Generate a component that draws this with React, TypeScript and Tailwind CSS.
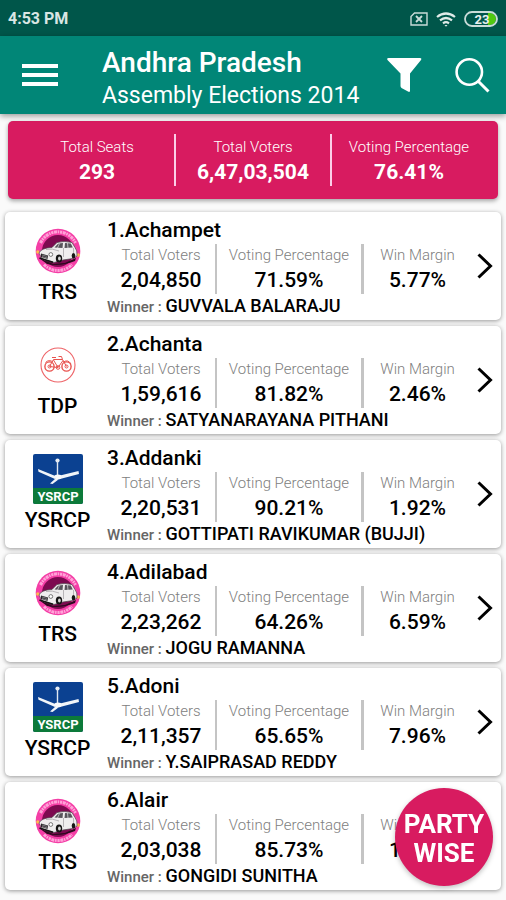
import React from 'react';

type Party = 'TRS' | 'TDP' | 'YSRCP';

interface Constituency {
  name: string;
  party: Party;
  voters: string;
  percentage: string;
  margin: string;
  winner: string;
}

const summary = [
  { label: 'Total Seats', value: '293' },
  { label: 'Total Voters', value: '6,47,03,504' },
  { label: 'Voting Percentage', value: '76.41%' },
];

const constituencies: Constituency[] = [
  { name: 'Achampet', party: 'TRS', voters: '2,04,850', percentage: '71.59%', margin: '5.77%', winner: 'GUVVALA BALARAJU' },
  { name: 'Achanta', party: 'TDP', voters: '1,59,616', percentage: '81.82%', margin: '2.46%', winner: 'SATYANARAYANA PITHANI' },
  { name: 'Addanki', party: 'YSRCP', voters: '2,20,531', percentage: '90.21%', margin: '1.92%', winner: 'GOTTIPATI RAVIKUMAR (BUJJI)' },
  { name: 'Adilabad', party: 'TRS', voters: '2,23,262', percentage: '64.26%', margin: '6.59%', winner: 'JOGU RAMANNA' },
  { name: 'Adoni', party: 'YSRCP', voters: '2,11,357', percentage: '65.65%', margin: '7.96%', winner: 'Y.SAIPRASAD REDDY' },
  { name: 'Alair', party: 'TRS', voters: '2,03,038', percentage: '85.73%', margin: '1.67%', winner: 'GONGIDI SUNITHA' },
];

const CarLogo = () => (
  <svg viewBox="0 0 46 46" className="size-[46px]" aria-hidden="true">
    <circle cx="23" cy="23" r="22.3" fill="#f43ea6" />
    <path d="M5.5 15 A19.3 19.3 0 0 1 40.5 15" fill="none" stroke="#ffa3d8" strokeWidth="3" strokeDasharray="3 .7 1.6 .8 2.2 .6" />
    <path d="M9 36.5 A19.3 19.3 0 0 0 37 36.5" fill="none" stroke="#ffa3d8" strokeWidth="3" strokeDasharray="3 .7 1.6 .8 2.2 .6" />
    <circle cx="23" cy="23" r="16" fill="#7d0a50" />
    <circle cx="2.8" cy="24" r="1.7" fill="#ffb84f" />
    <circle cx="43.2" cy="27" r="1.7" fill="#ffb84f" />
    <path d="M4 30 L18 36 L30 35 L41 30 L40 33 Q25 39 12 36Z" fill="#2c0a1f" />
    <path d="M4 25 Q6 20 17 19.5 L22 14.5 Q29 12.5 37 14.5 L40 19.5 Q42.5 22 42 28 L38 30.5 L28 32 L19 34.5 L7 31Z" fill="#efedee" stroke="#4b4549" strokeWidth=".7" />
    <path d="M19.5 19.5 L23 15.8 Q26 15 28 15 L27.5 20Z M30 15 L35.8 15.6 L37.8 19.5 L29.5 20Z" fill="#57545a" />
    <path d="M24.5 15.5 L22.5 20 M32.5 15 L33 20" stroke="#e6e4e6" strokeWidth=".7" />
    <path d="M11 21.5 Q17 20 24 23 M28.5 20 V29 M38.5 20 V25" fill="none" stroke="#a09ca0" strokeWidth=".7" />
    <path d="M6 25.5 L13 27.5 L12.5 31 L6 29Z" fill="#29262a" />
    <path d="M7 27 L12 28.3 M7 28.6 L12 29.9" stroke="#d0ced0" strokeWidth=".5" />
    <circle cx="15.8" cy="26.5" r="1.9" fill="#fff" stroke="#444" strokeWidth=".7" />
    <ellipse cx="24" cy="30.5" rx="3.2" ry="4" fill="#151515" />
    <ellipse cx="24.4" cy="30.5" rx="1.4" ry="2" fill="#d5d5d5" />
    <ellipse cx="38.5" cy="27.8" rx="1.8" ry="2.8" fill="#151515" />
    <path d="M4.5 30 L18 34.3" stroke="#151515" strokeWidth="1.6" />
  </svg>
);

const CycleLogo = () => (
  <svg viewBox="0 0 36 36" className="size-9" fill="none" stroke="#e8534f" aria-hidden="true">
    <circle cx="18" cy="18" r="17" stroke="#ee6468" strokeWidth="1.1" />
    <circle cx="9.5" cy="19.5" r="4.6" strokeWidth="1.4" />
    <circle cx="26.5" cy="19.5" r="4.6" strokeWidth="1.4" />
    <circle cx="9.5" cy="19.5" r="1.5" strokeWidth="1" />
    <circle cx="26.5" cy="19.5" r="1.5" strokeWidth="1" />
    <circle cx="18" cy="20.5" r="1.8" strokeWidth="1" />
    <path d="M9.5 19.5 L13.5 12.5 L22.5 12.5 L26.5 19.5 M13.5 13 L18 20.5 L23 13.5 M9.5 19.5 L18 20.5 M12 10.5h4 M22.5 12.5 L21.5 9.5 L18.5 9.5 M5.5 15.5 Q9 12 13 15 M23.5 15 Q28 12 31 17" strokeWidth="1" />
  </svg>
);

const FanLogo = () => (
  <svg viewBox="0 0 50 50" className="size-[50px]" aria-hidden="true">
    <rect width="50" height="50" rx="2" fill="#0b4191" />
    <path d="M0 34 H50 V48 a2 2 0 0 1 -2 2 H2 a2 2 0 0 1 -2 -2Z" fill="#0c7a3a" />
    <circle cx="24.5" cy="6.5" r="2.1" fill="#e8eef6" />
    <path d="M24.5 7 V22" stroke="#dfe7f1" strokeWidth="1.4" />
    <path d="M23 22.3 L5 15 L5.5 17.8 L22 25Z M27 21.5 L45.5 17 L46 20 L27 25Z M22.5 24.5 L17 29.5 L19.5 30 L25.5 25.5Z" fill="#f1f5f9" />
    <ellipse cx="25" cy="23" rx="3.6" ry="2.4" fill="#f7f9fb" />
    <text x="25" y="47" textAnchor="middle" fontFamily="Roboto, sans-serif" fontSize="13" fontWeight="700" fill="#fff">YSRCP</text>
  </svg>
);

const logos: Record<Party, React.ReactNode> = {
  TRS: <CarLogo />,
  TDP: <CycleLogo />,
  YSRCP: <FanLogo />,
};

const StatusBar = () => (
  <div className="flex h-9 items-center justify-between bg-[#00564a] px-2 pt-[2px] text-white">
    <span className="text-base font-bold text-[#d9e6e4]">4:53 PM</span>
    <div className="flex items-center gap-2">
      <svg viewBox="0 0 18 14" className="h-[14px] w-[18px]" fill="none" stroke="#c9dcd9" strokeWidth="1.4" aria-hidden="true">
        <path d="M4.5 1 H17 V13 H1 V4.5Z" />
        <path d="M6 4 L12 10 M12 4 L6 10" strokeWidth="1.8" />
      </svg>
      <svg viewBox="0 0 20 15" className="h-[15px] w-5" fill="none" stroke="#e0ebe9" strokeWidth="2.2" aria-hidden="true">
        <path d="M1 5 Q10 -2 19 5 M4 8.3 Q10 3.7 16 8.3 M7 11.3 Q10 9 13 11.3" />
        <path d="M8.5 13 L10 14.8 L11.5 13Z" fill="#e0ebe9" stroke="none" />
      </svg>
      <svg viewBox="0 0 34 16" className="h-4 w-[34px]" aria-hidden="true">
        <path d="M24 2 h2 a6 6 0 0 1 0 12 h-2Z" fill="#4fc910" />
        <rect x="1" y="1" width="32" height="14" rx="7" fill="none" stroke="#c9dcd9" strokeWidth="1.8" />
        <text x="18" y="12.5" textAnchor="middle" fontFamily="Roboto, sans-serif" fontSize="13" fontWeight="700" fill="#e8f0ef">23</text>
      </svg>
    </div>
  </div>
);

const Header = () => (
  <header className="relative flex h-[78px] items-center bg-[#018677] pl-[22px] pr-4 text-white shadow-[0_2px_6px_rgba(0,0,0,0.4)]">
    <button type="button" aria-label="Menu" className="flex w-9 flex-col gap-[5px]">
      <span className="h-1 w-full bg-white" />
      <span className="h-1 w-full bg-white" />
      <span className="h-1 w-full bg-white" />
    </button>
    <div className="ml-11 flex-1 pt-2">
      <h1 className="text-[28px] font-medium leading-[34px]">Andhra Pradesh</h1>
      <p className="text-[23px] leading-8">Assembly Elections 2014</p>
    </div>
    <div className="flex items-center gap-8">
      <button type="button" aria-label="Filter">
        <svg viewBox="0 0 36 36" className="size-9" fill="#fff" aria-hidden="true">
          <path d="M2.5 1 H34 Q36 1 35 3 L24 16.5 V34 Q23.5 35.5 22 34.5 L15.5 31 Q14.5 30 14.5 29 V16.5 L1.5 3 Q.5 1 2.5 1Z" />
        </svg>
      </button>
      <button type="button" aria-label="Search">
        <svg viewBox="0 0 36 36" className="size-9" fill="none" stroke="#fff" strokeWidth="2.6" aria-hidden="true">
          <circle cx="15.3" cy="15" r="12.7" />
          <path d="M24 24 L34.5 34.5" strokeWidth="3" />
        </svg>
      </button>
    </div>
  </header>
);

const Summary = () => (
  <dl className="mx-2 mt-[7px] flex h-[78px] items-center rounded-[5px] bg-[#d81b60] px-3 text-center text-white shadow-[0_2px_4px_rgba(0,0,0,0.35)]">
    {summary.map((item, index) => (
      <div
        key={item.label}
        className={index === 1 ? 'h-[52px] flex-1 basis-0 border-x-2 border-pink-200' : 'h-[52px] flex-1 basis-0'}
      >
        <dt className="whitespace-nowrap text-[15px] font-light leading-[26px]">{item.label}</dt>
        <dd className="text-[21px] font-bold leading-6">{item.value}</dd>
      </div>
    ))}
  </dl>
);

const Stat = ({ label, value }: { label: string; value: string }) => (
  <div className="text-center">
    <dt className="whitespace-nowrap text-[15px] font-light leading-[22px] text-[#808080]">{label}</dt>
    <dd className="text-[21px] font-medium leading-7">{value}</dd>
  </div>
);

const ConstituencyCard = ({ item, number }: { item: Constituency; number: number }) => (
  <li>
    <a
      href="#"
      className="flex h-[108px] rounded-[5px] bg-white text-black shadow-[0_1px_4px_rgba(0,0,0,0.4)]"
    >
      <div className="flex w-[102px] shrink-0 flex-col items-center pl-[3px] pt-[13px]">
        <div className="flex h-[52px] items-center">{logos[item.party]}</div>
        <span className="text-[21px] font-medium leading-[30px]">{item.party}</span>
      </div>
      <div className="min-w-0 flex-1 pt-[5px]">
        <h2 className="text-[21px] font-medium leading-[27px]">
          {number}.{item.name}
        </h2>
        <dl className="grid h-[50px] grid-cols-[110px_147px_1fr]">
          <div className="border-r-2 border-[#c4c4c4]">
            <Stat label="Total Voters" value={item.voters} />
          </div>
          <div className="border-r-3 border-[#c4c4c4]">
            <Stat label="Voting Percentage" value={item.percentage} />
          </div>
          <Stat label="Win Margin" value={item.margin} />
        </dl>
        <p className="whitespace-nowrap text-[18px] font-medium leading-6">
          <span className="text-[15px] text-[#666]">Winner : </span>
          {item.winner}
        </p>
      </div>
      <svg viewBox="0 0 16 26" className="ml-[6px] mr-2 mt-[41px] h-[26px] w-4 shrink-0" fill="none" stroke="#000" strokeWidth="3" aria-hidden="true">
        <path d="M1.5 1.5 L13.5 13 L1.5 24.5" />
      </svg>
    </a>
  </li>
);

const App: React.FC = () => {
  return (
    <div className="relative min-h-screen bg-[#fafafa] pb-2 font-[Roboto,sans-serif]">
      <StatusBar />
      <Header />
      <main>
        <Summary />
        <ul className="mx-[5px] mt-[13px] flex flex-col gap-[6px]">
          {constituencies.map((item, index) => (
            <ConstituencyCard key={item.name} item={item} number={index + 1} />
          ))}
        </ul>
      </main>
      <button
        type="button"
        className="fixed bottom-[14px] right-[13px] size-[98px] rounded-full bg-[#d81b60] pt-1 text-[26px] font-bold leading-[29px] text-white shadow-[0_2px_5px_rgba(0,0,0,0.25)]"
      >
        PARTY WISE
      </button>
    </div>
  );
};

export default App;
